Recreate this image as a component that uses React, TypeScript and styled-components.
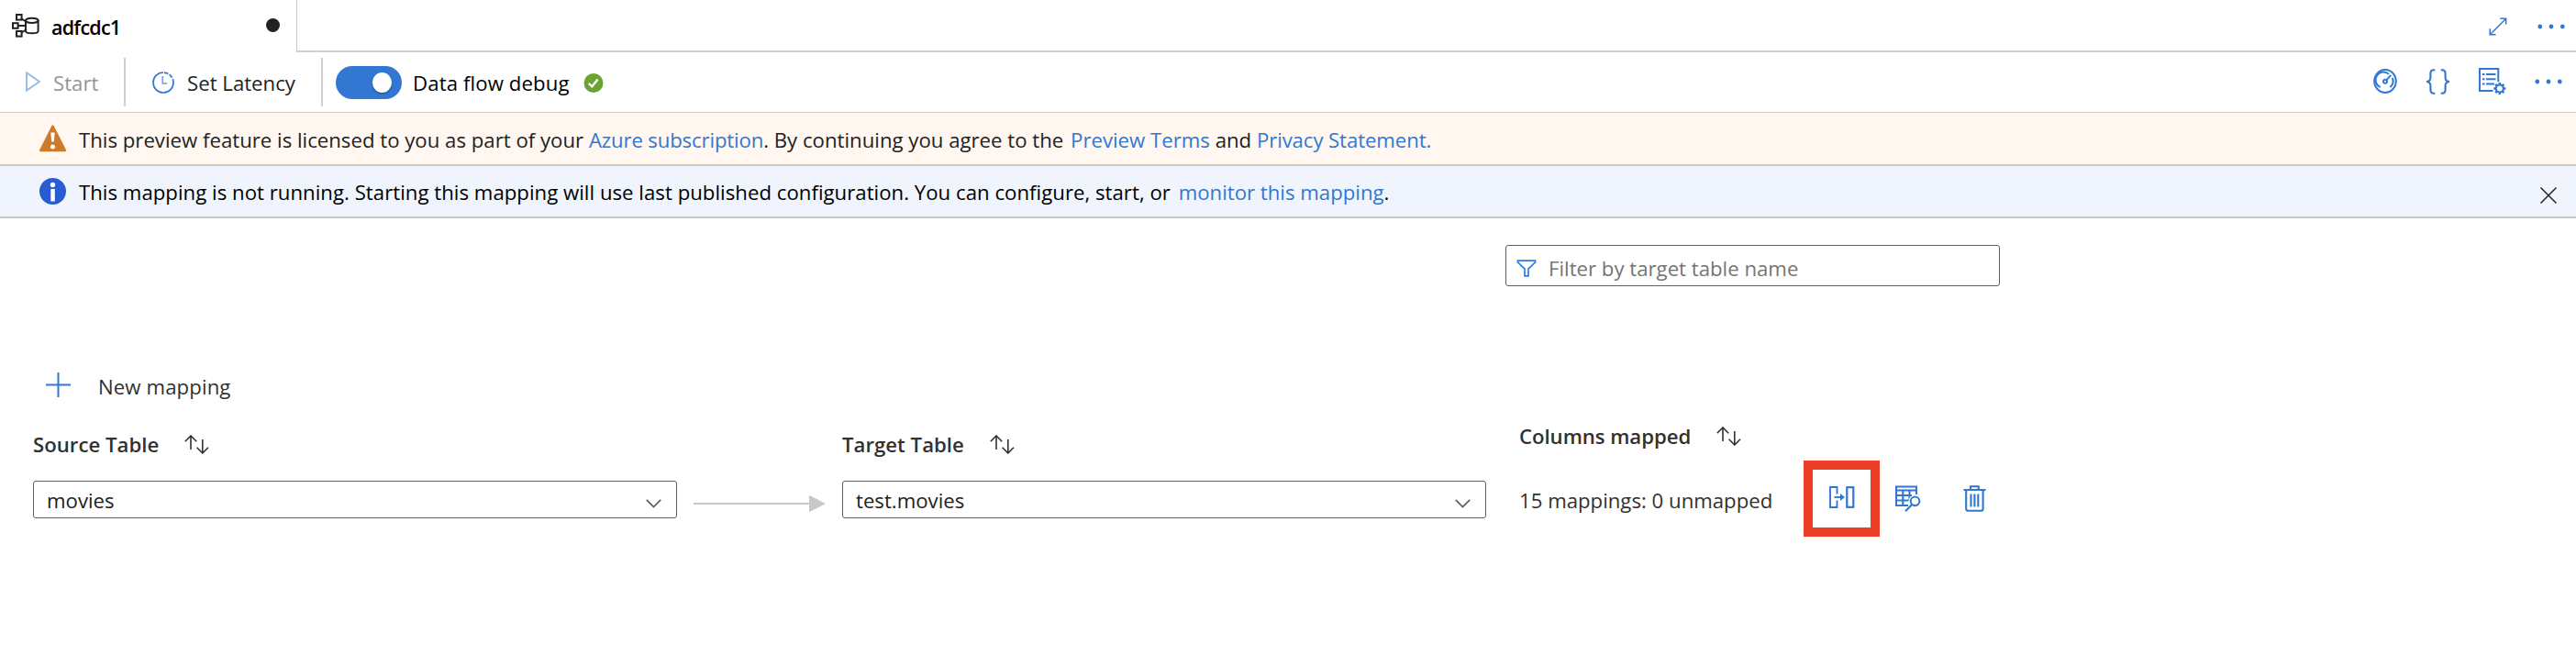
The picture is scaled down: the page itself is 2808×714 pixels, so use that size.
import React from "react";
import styled, { createGlobalStyle } from "styled-components";

const blue = "#3277d1";
const ink = "#323130";

const GlobalStyle = createGlobalStyle`
  * { box-sizing: border-box; }
  body {
    margin: 0;
    background: #fff;
    color: ${ink};
    font: 400 22.2px/28px "Open Sans", "Noto Sans", sans-serif;
  }
  svg { display: block; flex: none; }
`;

const Page = styled.div`
  width: 2808px;
  height: 714px;
  overflow: hidden;
  display: flex;
  flex-direction: column;
`;

const Label = styled.span<{ $color?: string; $track?: number; $drop?: number }>`
  white-space: nowrap;
  color: ${(p) => p.$color ?? "#222"};
  letter-spacing: ${(p) => p.$track ?? 0}px;
  padding-top: ${(p) => p.$drop ?? 2}px;
`;

/* Tab strip */
const TabStrip = styled.header`
  display: flex;
  height: 57px;
`;
const Tab = styled.div`
  width: 324px;
  display: flex;
  align-items: center;
  padding: 0 18px 2px 13px;
  border-right: 1px solid #c8c8c8;
`;
const TabTitle = styled.span`
  flex: 1;
  margin-left: 13px;
  padding-top: 4px;
  font-size: 21.5px;
  font-weight: 600;
  letter-spacing: -0.75px;
  color: #000;
`;
const DirtyDot = styled.span`
  width: 15px;
  height: 15px;
  border-radius: 50%;
  background: #222;
`;
const StripRest = styled.div`
  flex: 1;
  display: flex;
  align-items: center;
  justify-content: flex-end;
  gap: 33px;
  padding: 2px 12px 0 0;
  border-bottom: 2px solid #d0d0d0;
`;

/* Toolbar */
const Toolbar = styled.nav`
  display: flex;
  align-items: center;
  height: 66px;
  border-bottom: 1px solid #cccccc;
`;
const ToolButton = styled.div<{ $width: number; $pad: number; $gap: number }>`
  display: flex;
  align-items: center;
  height: 53px;
  width: ${(p) => p.$width}px;
  padding-left: ${(p) => p.$pad}px;
  gap: ${(p) => p.$gap}px;
  border-right: 2px solid #d0d0d0;
`;
const DebugGroup = styled.div`
  flex: 1;
  display: flex;
  align-items: center;
  padding-left: 14px;
`;
const Toggle = styled.span`
  width: 72px;
  height: 36px;
  margin-right: 12px;
  padding-right: 11px;
  border-radius: 18px;
  background: ${blue};
  display: flex;
  align-items: center;
  justify-content: flex-end;
`;
const Knob = styled.span`
  width: 21px;
  height: 22px;
  border-radius: 50%;
  background: #fff;
  box-shadow: 0 1px 2px rgba(0, 0, 0, 0.35);
`;
const CheckSlot = styled.span`
  margin-left: 15px;
`;
const ToolIcons = styled.div`
  display: flex;
  align-items: center;
  gap: 31px;
  padding: 0 15px 2px 0;
`;

/* Message bars */
const MessageBar = styled.div<{ $bg: string; $height: number }>`
  display: flex;
  align-items: center;
  height: ${(p) => p.$height}px;
  padding: 0 21px 0 43px;
  gap: 13px;
  background: ${(p) => p.$bg};
  border-bottom: 2px solid #c8c8ca;
`;
const Message = styled.p<{ $color: string; $drop: number; $track?: number }>`
  flex: 1;
  margin: 0;
  padding-top: ${(p) => p.$drop}px;
  color: ${(p) => p.$color};
  letter-spacing: ${(p) => p.$track ?? 0}px;
`;
const Link = styled.a<{ $gap?: number; $track?: number }>`
  color: ${blue};
  margin-left: ${(p) => p.$gap ?? 0}px;
  letter-spacing: ${(p) => p.$track ?? 0}px;
`;
const CloseSlot = styled.div`
  padding-top: 9px;
`;

/* Mapping editor */
const Main = styled.main`
  flex: 1;
  padding: 29px 0 0 36px;
`;
const FilterBox = styled.div`
  display: flex;
  align-items: center;
  width: 539px;
  height: 45px;
  margin-left: 1605px;
  padding: 5px 0 0 11px;
  gap: 13px;
  border: 1px solid #5f5e5c;
  border-radius: 3px;
`;
const NewMapping = styled.div`
  display: flex;
  align-items: center;
  height: 40px;
  margin-top: 87px;
  margin-bottom: 1px;
  padding-left: 14px;
  gap: 30px;
`;
const MappingRow = styled.section`
  display: flex;
  align-items: flex-start;
`;
const Column = styled.div<{ $width: number; $top: number; $gap: number; $inset?: number }>`
  display: flex;
  flex-direction: column;
  width: ${(p) => p.$width}px;
  padding: ${(p) => p.$top}px 0 0 ${(p) => p.$inset ?? 0}px;
  gap: ${(p) => p.$gap}px;
`;
const ColumnHead = styled.div`
  display: flex;
  align-items: center;
  height: 30px;
  gap: 28px;
  font-weight: 600;
`;
const Select = styled.div`
  display: flex;
  align-items: center;
  justify-content: space-between;
  height: 41px;
  padding: 0 16px 0 14px;
  border: 1px solid #5f5e5c;
  border-radius: 3px;
`;
const ChevronSlot = styled.span`
  padding-top: 8px;
`;
const Connector = styled.div`
  width: 180px;
  padding: 99px 18px 0 18px;
`;
const Actions = styled.div`
  display: flex;
  align-items: center;
  height: 83px;
`;
const HighlightedAction = styled.button`
  display: flex;
  align-items: center;
  justify-content: center;
  width: 83px;
  height: 83px;
  margin: 0 17px 0 33px;
  padding: 0 0 3px;
  border: 10px solid #eb4025;
  background: #fff;
`;
const Count = styled.span`
  width: 277px;
  padding-top: 4px;
  white-space: nowrap;
`;
const TrashSlot = styled.span`
  margin-left: 46px;
`;

const Dots = () => (
  <svg width="30" height="6" viewBox="0 0 30 6" fill={blue}>
    <circle cx="2.8" cy="3" r="2.4" />
    <circle cx="15" cy="3" r="2.4" />
    <circle cx="27.3" cy="3" r="2.4" />
  </svg>
);

const SourceIcon = () => (
  <svg width="30" height="26" viewBox="0 0 30 26" fill="none" stroke="#222" strokeWidth="2">
    <rect x="5" y="1" width="5.6" height="5.6" />
    <rect x="1" y="10.2" width="5.6" height="5.6" />
    <rect x="5" y="19" width="5.6" height="5.6" />
    <path d="M10.6 5.5L16 9M6.6 13H15M10.6 20.5L16 17" />
    <path d="M15 7.3v11.4c0 1.6 3 2.5 6.8 2.5s6.8-.9 6.8-2.5V7.3" />
    <ellipse cx="21.8" cy="7.3" rx="6.8" ry="2.6" />
  </svg>
);

const SortIcon = () => (
  <svg width="27" height="21" viewBox="0 0 27 21" fill="none" stroke={ink} strokeWidth="1.6">
    <path d="M7 16V1.2M.8 7.2L7 1l6.2 6.2M19.8 5v14.8M13.6 13.8l6.2 6.2 6.2-6.2" />
  </svg>
);

const Chevron = () => (
  <svg width="17" height="10" viewBox="0 0 17 10" fill="none" stroke="#5f5e5c" strokeWidth="1.7">
    <path d="M.8 .8L8.5 8.6L16.2 .8" />
  </svg>
);

const gearTeeth = [0, 45, 90, 135, 180, 225, 270, 315];

const TableSelect = ({ title, value }: { title: string; value: string }) => (
  <Column $width={702} $top={29} $gap={25}>
    <ColumnHead>
      <Label $color={ink}>{title}</Label>
      <SortIcon />
    </ColumnHead>
    <Select>
      <Label>{value}</Label>
      <ChevronSlot>
        <Chevron />
      </ChevronSlot>
    </Select>
  </Column>
);

export default function App() {
  return (
    <Page>
      <GlobalStyle />
      <TabStrip>
        <Tab>
          <SourceIcon />
          <TabTitle>adfcdc1</TabTitle>
          <DirtyDot />
        </Tab>
        <StripRest>
          <svg width="20" height="20" viewBox="0 0 20 20" fill="none" stroke={blue} strokeWidth="1.5">
            <path d="M1.5 18.5l17-17M12.3 1.2h6.4v6.4M1.2 12.3v6.4h6.4" />
          </svg>
          <Dots />
        </StripRest>
      </TabStrip>

      <Toolbar>
        <ToolButton $width={137} $pad={28} $gap={13}>
          <svg width="17" height="23" viewBox="0 0 17 23" fill="none" stroke="#98bbe8" strokeWidth="1.9">
            <path d="M1 1.2v19.4L15 11z" />
          </svg>
          <Label $color="#959595">Start</Label>
        </ToolButton>
        <ToolButton $width={215} $pad={29} $gap={14}>
          <svg width="24" height="24" viewBox="0 0 24 24" fill="none" stroke={blue} strokeWidth="1.7">
            <path d="M12 1A11 11 0 1 0 23 12" />
            <path d="M13 1.05A11 11 0 0 1 23 12" strokeDasharray="4.5 1.6" />
            <path d="M11.3 5v8h5" stroke="#6d9fe0" />
          </svg>
          <Label>Set Latency</Label>
        </ToolButton>
        <DebugGroup>
          <Toggle>
            <Knob />
          </Toggle>
          <Label $color="#000" $track={0.1}>
            Data flow debug
          </Label>
          <CheckSlot>
            <svg width="22" height="22" viewBox="0 0 22 22">
              <circle cx="11" cy="11.5" r="10.5" fill="#6ba42f" />
              <path d="M5.8 11.8l3.6 3.5 6.2-7.8" fill="none" stroke="#fff" strokeWidth="2.4" />
            </svg>
          </CheckSlot>
        </DebugGroup>
        <ToolIcons>
          <svg width="26" height="27" viewBox="0 0 26 27" fill="none" stroke={blue} strokeWidth="2">
            <ellipse cx="13" cy="13.5" rx="11.8" ry="12.4" />
            <path d="M7.6 20A8.6 8.6 0 1 1 17 5.9" />
            <path d="M20.8 10A8.6 8.6 0 0 1 18.4 20" />
            <circle cx="13" cy="13.8" r="2" />
            <path d="M14.3 12.4l5-5.6" />
          </svg>
          <svg width="27" height="28" viewBox="0 0 27 28" fill="none" stroke={blue} strokeWidth="2.1">
            <path d="M10.3 1.2H9C6 1.2 5.4 3 5.4 5.2v4.2c0 2.8-1.4 4.4-4.4 4.6 3 .2 4.4 1.8 4.4 4.6v4.2c0 2.2.6 4 3.6 4h1.3" />
            <path d="M16.7 1.2H18c3 0 3.6 1.8 3.6 4v4.2c0 2.8 1.4 4.4 4.4 4.6-3 .2-4.4 1.8-4.4 4.6v4.2c0 2.2-.6 4-3.6 4h-1.3" />
          </svg>
          <svg width="30" height="29" viewBox="0 0 30 29" fill="none" stroke={blue} strokeWidth="2">
            <path d="M21.3 15V1.1H1v24h14.500" />
            <path d="M4 7h2.5M8 7h10.5M4 12.3h2.5M8 12.3h10.5M4 17.6h2.5M8 17.6h9" />
            <circle cx="22.8" cy="22.5" r="4" />
            {gearTeeth.map((a) => (
              <path key={a} d="M22.8 18.5V16" strokeWidth="2.6" transform={`rotate(${a} 22.8 22.5)`} />
            ))}
          </svg>
          <Dots />
        </ToolIcons>
      </Toolbar>

      <MessageBar $bg="#fff7f0" $height={58}>
        <svg width="30" height="30" viewBox="0 0 30 30">
          <path
            d="M14.5 1.5L28 28H1.2z"
            fill="#cf7a2b"
            stroke="#cf7a2b"
            strokeWidth="2.4"
            strokeLinejoin="round"
          />
          <path d="M12.3 8.5h4.4l-.9 10h-2.600z" fill="#fff" />
          <circle cx="14.5" cy="24" r="2.5" fill="#fff" />
        </svg>
        <Message $color="#222" $drop={4}>
          This preview feature is licensed to you as part of your <Link $track={-0.15}>Azure subscription</Link>. By
          continuing you agree to the <Link $gap={2}>Preview Terms</Link> and{" "}
          <Link $track={-0.1}>Privacy Statement.</Link>
        </Message>
      </MessageBar>
      <MessageBar $bg="#f0f5fd" $height={57}>
        <svg width="30" height="30" viewBox="0 0 30 30">
          <circle cx="14.5" cy="14.500" r="14.5" fill="#285bd4" />
          <circle cx="14.5" cy="7.5" r="2.7" fill="#fff" />
          <path d="M12.3 12h4.5v13.5h-4.5z" fill="#fff" />
        </svg>
        <Message $color="#000" $drop={2} $track={0.02}>
          This mapping is not running. Starting this mapping will use last published configuration. You can configure,
          start, or <Link $gap={3}>monitor this mapping</Link>.
        </Message>
        <CloseSlot>
          <svg width="18" height="18" viewBox="0 0 18 18" fill="none" stroke="#222" strokeWidth="1.5">
            <path d="M.5 .5l17 17M17.5 .5l-17 17" />
          </svg>
        </CloseSlot>
      </MessageBar>

      <Main>
        <FilterBox>
          <svg width="22" height="19" viewBox="0 0 22 19" fill="none" stroke="#2a7be4" strokeWidth="1.7">
            <path d="M1.5 1.2h19v1.6L13 10.2v7.7H9v-7.7L1.5 2.8z" />
          </svg>
          <Label $color="#757575">Filter by target table name</Label>
        </FilterBox>

        <NewMapping>
          <svg width="27" height="27" viewBox="0 0 27 27" stroke={blue} strokeWidth="2">
            <path d="M13.5 0v27M0 13.500h27" />
          </svg>
          <Label $color={ink} $drop={6} $track={0.1}>
            New mapping
          </Label>
        </NewMapping>

        <MappingRow>
          <TableSelect title="Source Table" value="movies" />
          <Connector>
            <svg width="144" height="20" viewBox="0 0 144 20" fill="#c8c8c8">
              <path d="M0 9h127v2H0zM126 .7l18 9.300-18 9.300z" />
            </svg>
          </Connector>
          <TableSelect title="Target Table" value="test.movies" />
          <Column $width={600} $top={20} $gap={12} $inset={36}>
            <ColumnHead>
              <Label $color={ink} $track={-0.06}>
                Columns mapped
              </Label>
              <SortIcon />
            </ColumnHead>
            <Actions>
              <Count>15 mappings: 0 unmapped</Count>
              <HighlightedAction>
                <svg width="28" height="24" viewBox="0 0 28 24" fill="none" stroke={blue} strokeWidth="1.9">
                  <path d="M8.5 8.5V1H1v22h7.5v-7.5" />
                  <path d="M5.5 12h8" />
                  <path d="M12 8l5 4-5 4z" fill={blue} stroke="none" />
                  <rect x="19.3" y="1.2" width="7" height="21.6" strokeWidth="2.2" />
                </svg>
              </HighlightedAction>
              <svg width="28" height="29" viewBox="0 0 28 29" fill="none" stroke={blue} strokeWidth="2.100">
                <path d="M23 10V1.500H1V22h13M1 5.500h22M1 11h17M1 16.500h14M8.300 5.500V22M15.500 5.500V17" />
                <circle cx="21.5" cy="17.5" r="7" fill="#fff" stroke="none" />
                <circle cx="21.5" cy="17.3" r="4.8" />
                <path d="M18.2 21L11 28.2" />
              </svg>
              <TrashSlot>
                <svg width="25" height="29" viewBox="0 0 25 29" fill="none" stroke={blue} strokeWidth="2.100">
                  <path d="M.5 5h24M8 5V1.200h8.800V5M3.200 5v20.500q0 2.300 2.300 2.300h13.800q2.300 0 2.300-2.300V5" />
                  <path d="M8.500 9.500v14M12.400 9.500v14M16.300 9.500v14" />
                </svg>
              </TrashSlot>
            </Actions>
          </Column>
        </MappingRow>
      </Main>
    </Page>
  );
}
